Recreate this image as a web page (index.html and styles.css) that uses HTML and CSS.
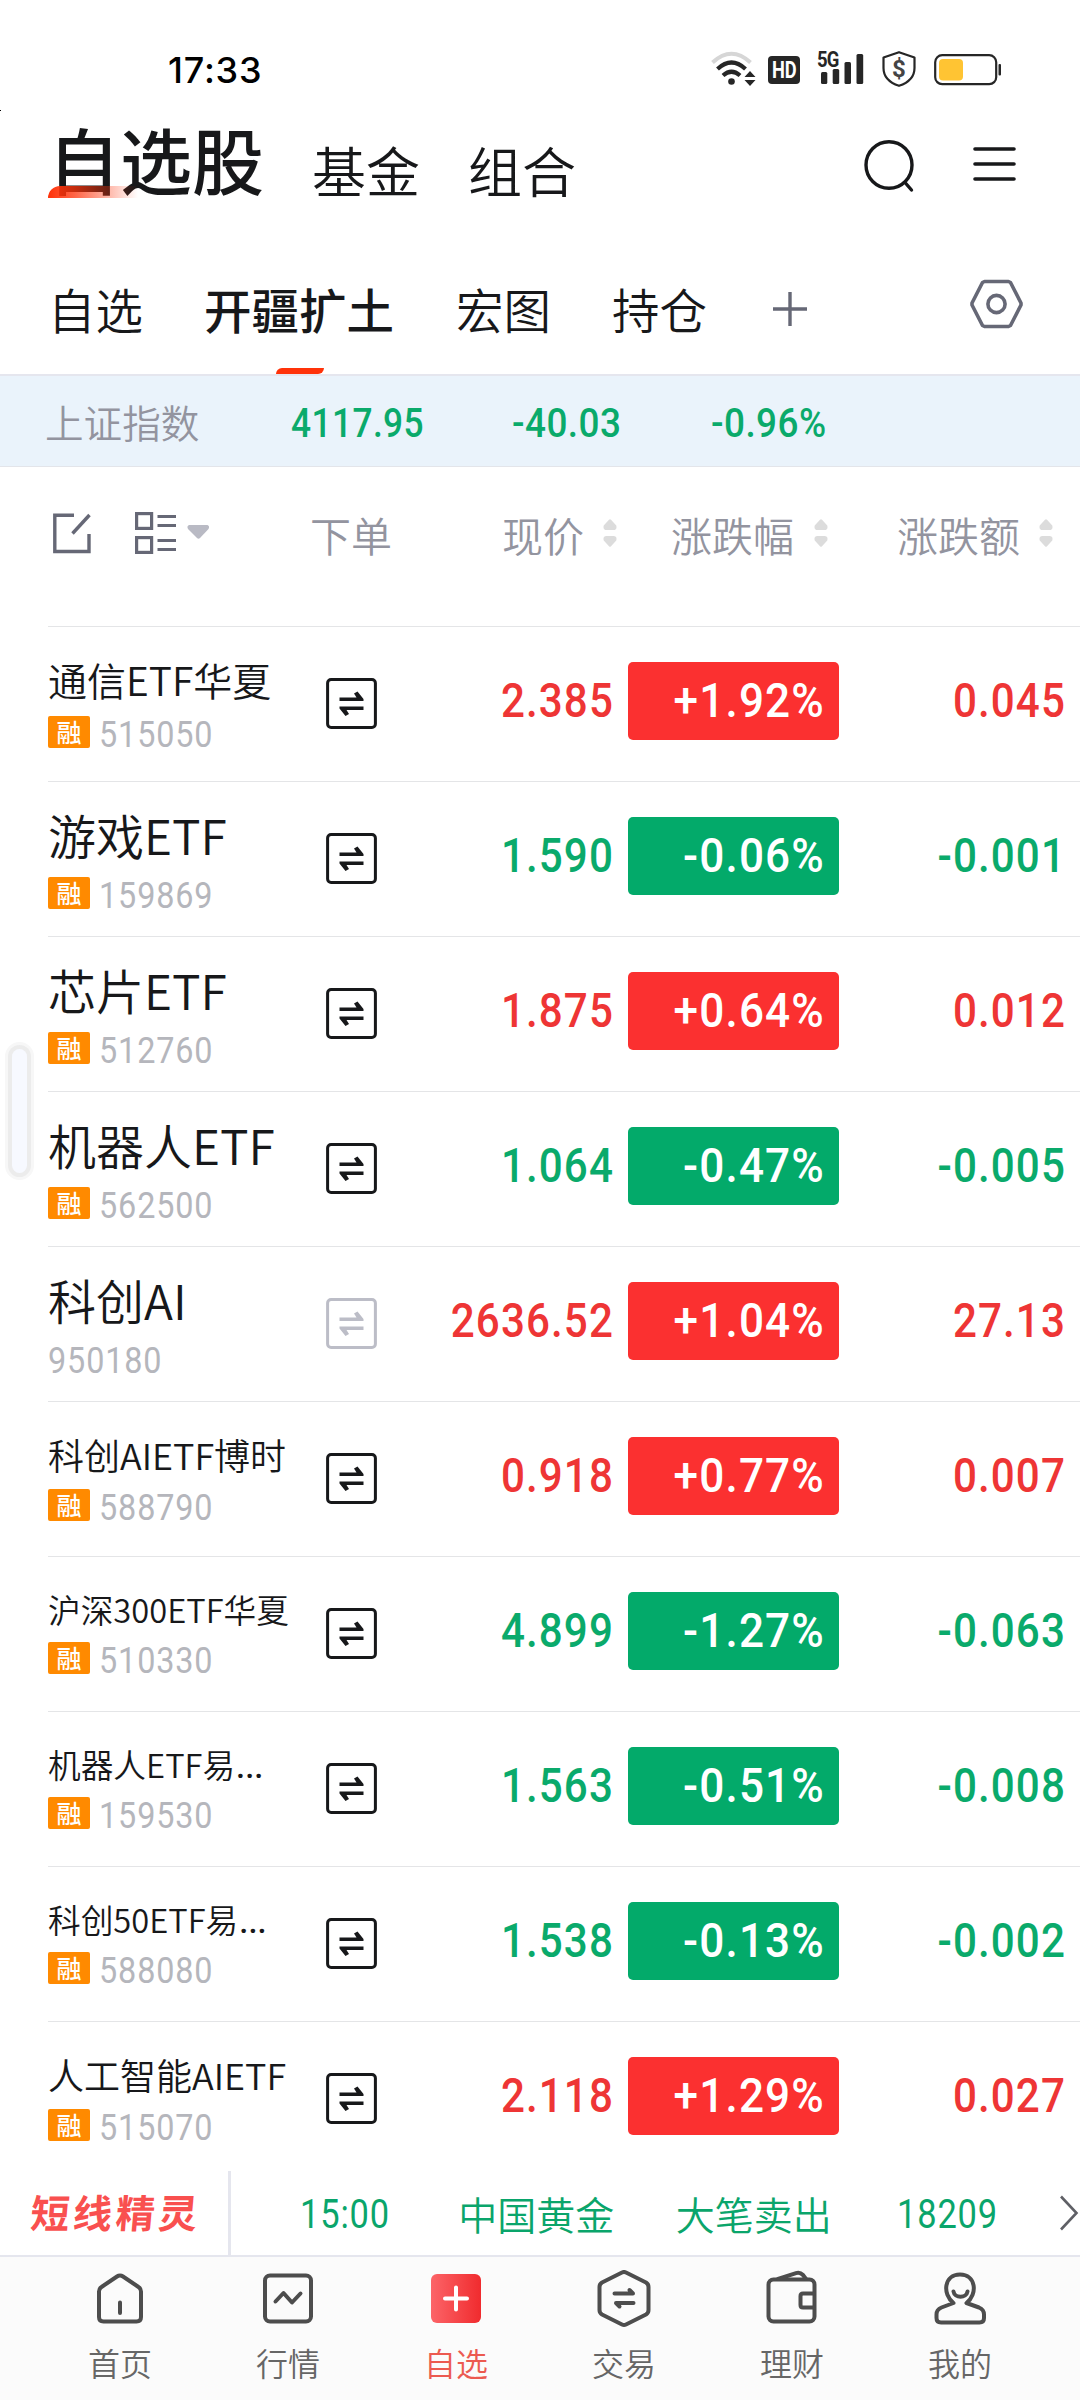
FILE: index.html
```html
<!DOCTYPE html>
<html lang="zh-CN">
<head>
<meta charset="utf-8">
<title>自选股</title>
<link rel="stylesheet" href="styles.css">
</head>
<body>
<svg class="defs" aria-hidden="true">
  <symbol id="order" viewBox="0 0 51 51">
    <rect x="1.6" y="1.6" width="47.8" height="47.8" rx="3.5" fill="none" stroke="currentColor" stroke-width="3"/>
    <path d="M13.500 19.500H30.500L28 15.500L31.500 13.500L37.500 21V23H13.500ZM37.500 28.500V32H20.500L23 36L19.500 38L13.500 30.500V28.500Z" fill="currentColor"/>
  </symbol>
  <symbol id="sort" viewBox="0 0 14 28">
    <path d="M6 .7Q7 -.3 8 .7L13.3 6.5Q14.3 11 10.5 11H3.5Q-.3 11 .7 6.5ZM6 27.300Q7 28.300 8 27.300L13.300 21.500Q14.300 17 10.500 17H3.500Q-.3 17 .7 21.500Z" fill="#dcdcdc"/>
  </symbol>
</svg>
<div class="phone">
  <i class="corner-mark"></i>
  <header class="status">
    <span class="clock">17:33</span>
    <div class="status-icons">
      <svg class="wifi" width="45" height="35" viewBox="0 0 45 35" fill="none">
        <path d="M1.500 11.500Q20.500 -6 39.500 11.500" stroke="#d6d6d6" stroke-width="4"/>
        <path d="M6.500 18Q20.500 5 34.500 18M12 24.500Q20.500 17 29 24.500" stroke="#262626" stroke-width="4.200"/>
        <circle cx="20.500" cy="30.500" r="3.300" fill="#262626"/>
        <path d="M39 20L44.500 26H33.500ZM39 35L33.500 29H44.500Z" fill="#262626"/>
      </svg>
      <span class="hd"><span>HD</span></span>
      <div class="signal">
        <span class="net">5G</span>
        <svg width="47" height="34" viewBox="0 0 47 34" fill="#262626"><rect x="4" y="21" width="6.300" height="12" rx="1.500"/><rect x="15.700" y="18" width="6.500" height="15" rx="1.500"/><rect x="27.500" y="11" width="6.500" height="22" rx="1.500"/><rect x="39.500" y="3" width="6.700" height="30" rx="1.500"/></svg>
      </div>
      <div class="shield">
        <svg width="34" height="36" viewBox="0 0 34 36" fill="none" stroke="#262626" stroke-width="2.200" stroke-linejoin="round"><path d="M17 1.200L32.500 6.500V17C32.500 26 27 31.500 17 34.800C7 31.500 1.500 26 1.500 17V6.500Z"/></svg>
        <span>$</span>
      </div>
      <svg class="battery" width="68" height="32" viewBox="0 0 68 32"><rect x="1.200" y="1.200" width="61" height="29" rx="7" fill="none" stroke="#262626" stroke-width="2.200"/><rect x="5" y="5" width="24" height="21.500" rx="4" fill="#ffc433"/><rect x="64.500" y="10" width="2.500" height="11.500" rx="1" fill="#262626"/></svg>
    </div>
  </header>

  <nav class="top">
    <span class="top-active">自选股<i></i></span>
    <span class="top-item">基金</span>
    <span class="top-item">组合</span>
    <svg class="search" width="54" height="56" viewBox="0 0 54 56" fill="none" stroke="#17181a" stroke-width="3.400" stroke-linecap="round"><ellipse cx="25" cy="26" rx="23" ry="23.300"/><path d="M41 43.500L47.500 51"/></svg>
    <svg class="menu" width="44" height="36" viewBox="0 0 44 36" stroke="#17181a" stroke-width="3.600" stroke-linecap="round"><path d="M2 3H41M2 18H41M2 33H41"/></svg>
  </nav>

  <nav class="groups">
    <span>自选</span>
    <span class="on">开疆扩土<i></i></span>
    <span>宏图</span>
    <span>持仓</span>
    <svg class="plus" width="34" height="34" viewBox="0 0 34 34" stroke="#666876" stroke-width="3.400"><path d="M0 17H34M17 0V34"/></svg>
    <svg class="gear" width="54" height="52" viewBox="0 0 54 52" fill="none" stroke="#666876" stroke-width="3.600" stroke-linejoin="round"><path d="M14.500 3.500H38.500L40.500 4.500L51 25L51 27L40.500 47.500L38.500 48.500H14.500L12.500 47.500L2 27V25L12.500 4.500Z"/><circle cx="26.500" cy="26" r="8.600"/></svg>
  </nav>

  <section class="index">
    <span class="index-name">上证指数</span>
    <span class="num i1">4117.95</span>
    <span class="num i2">-40.03</span>
    <span class="num i3">-0.96%</span>
  </section>

  <section class="head">
    <svg class="edit" width="38" height="41" viewBox="0 0 38 41" fill="none" stroke="#666876" stroke-width="3.400"><path d="M21 2.200H1.800V38.500H36V21"/><path d="M19.500 20.500L36.500 2"/></svg>
    <svg class="view" width="75" height="42" viewBox="0 0 75 42" fill="none" stroke="#666876" stroke-width="3.200"><rect x="1.600" y="1.600" width="15" height="14.800"/><rect x="1.600" y="25.600" width="15" height="14.800"/><path d="M22.500 4.500H41M22.500 13.500H41M22.500 28.500H41M22.500 37.500H41"/><path d="M54 13H72.500Q75 14 73.500 17L65 26Q63.500 27.500 62 26L53 17Q51.500 14 54 13Z" fill="#b9bac4" stroke="none"/></svg>
    <span class="h-order">下单</span>
    <span class="h-price">现价</span><svg class="sort s1"><use href="#sort"/></svg>
    <span class="h-rate">涨跌幅</span><svg class="sort s2"><use href="#sort"/></svg>
    <span class="h-diff">涨跌额</span><svg class="sort s3"><use href="#sort"/></svg>
  </section>

  <main class="list">
    <article class="row up"><div class="stock m"><b>通信ETF华夏</b><p><em>融</em><span class="num">515050</span></p></div><svg class="order"><use href="#order"/></svg><span class="num price">2.385</span><div class="rate"><span class="num">+1.92%</span></div><span class="num diff">0.045</span></article>
    <article class="row down"><div class="stock l"><b>游戏ETF</b><p><em>融</em><span class="num">159869</span></p></div><svg class="order"><use href="#order"/></svg><span class="num price">1.590</span><div class="rate"><span class="num">-0.06%</span></div><span class="num diff">-0.001</span></article>
    <article class="row up"><div class="stock l"><b>芯片ETF</b><p><em>融</em><span class="num">512760</span></p></div><svg class="order"><use href="#order"/></svg><span class="num price">1.875</span><div class="rate"><span class="num">+0.64%</span></div><span class="num diff">0.012</span></article>
    <article class="row down"><div class="stock l"><b>机器人ETF</b><p><em>融</em><span class="num">562500</span></p></div><svg class="order"><use href="#order"/></svg><span class="num price">1.064</span><div class="rate"><span class="num">-0.47%</span></div><span class="num diff">-0.005</span></article>
    <article class="row up"><div class="stock l"><b>科创AI</b><p><span class="num">950180</span></p></div><svg class="order off"><use href="#order"/></svg><span class="num price">2636.52</span><div class="rate"><span class="num">+1.04%</span></div><span class="num diff">27.13</span></article>
    <article class="row up"><div class="stock s"><b>科创AIETF博时</b><p><em>融</em><span class="num">588790</span></p></div><svg class="order"><use href="#order"/></svg><span class="num price">0.918</span><div class="rate"><span class="num">+0.77%</span></div><span class="num diff">0.007</span></article>
    <article class="row down"><div class="stock xs"><b>沪深300ETF华夏</b><p><em>融</em><span class="num">510330</span></p></div><svg class="order"><use href="#order"/></svg><span class="num price">4.899</span><div class="rate"><span class="num">-1.27%</span></div><span class="num diff">-0.063</span></article>
    <article class="row down"><div class="stock xs"><b>机器人ETF易<u>...</u></b><p><em>融</em><span class="num">159530</span></p></div><svg class="order"><use href="#order"/></svg><span class="num price">1.563</span><div class="rate"><span class="num">-0.51%</span></div><span class="num diff">-0.008</span></article>
    <article class="row down"><div class="stock xs"><b>科创50ETF易<u>...</u></b><p><em>融</em><span class="num">588080</span></p></div><svg class="order"><use href="#order"/></svg><span class="num price">1.538</span><div class="rate"><span class="num">-0.13%</span></div><span class="num diff">-0.002</span></article>
    <article class="row up"><div class="stock s"><b>人工智能AIETF</b><p><em>融</em><span class="num">515070</span></p></div><svg class="order"><use href="#order"/></svg><span class="num price">2.118</span><div class="rate"><span class="num">+1.29%</span></div><span class="num diff">0.027</span></article>
  </main>

  <section class="ticker">
    <strong><span>短线精灵</span></strong>
    <span class="num t-time">15:00</span>
    <span class="t-name">中国黄金</span>
    <span class="t-act">大笔卖出</span>
    <span class="num t-vol">18209</span>
    <svg class="more" width="20" height="36" viewBox="0 0 20 36" fill="none" stroke="#5f6066" stroke-width="2.600"><path d="M1 1.500L16.500 18L1 34.500"/></svg>
  </section>

  <nav class="tabs">
    <a><svg viewBox="0 0 60 60"><path d="M30 5.500Q31.500 5.500 33 6.500L48.500 17Q51 18.500 51 21.500V47Q51 51.500 46.500 51.500H13.500Q9 51.500 9 47V21.500Q9 18.500 11.500 17L27 6.500Q28.500 5.500 30 5.500ZM30 32.500V43"/></svg>首页</a>
    <a><svg viewBox="0 0 60 60"><rect x="7" y="5.500" width="46" height="46" rx="5"/><path d="M17.500 31.500L25.500 23L34 32.500L42.500 23.500"/></svg>行情</a>
    <a class="sel"><svg viewBox="0 0 60 60"><defs><linearGradient id="red"><stop offset="0" stop-color="#fc6468"/><stop offset="1" stop-color="#f02b2e"/></linearGradient></defs><rect x="5" y="4" width="50" height="49" rx="6" fill="url(#red)" stroke="none"/><path d="M19 28.500H41M30 17.500V39.500" stroke="#fff"/></svg>自选</a>
    <a><svg viewBox="0 0 60 60"><path d="M28 2.500Q30 1.500 32 2.500L52 12.500Q54.500 14 54.500 17V40Q54.500 43 52 44.500L32 54.500Q30 55.500 28 54.500L8 44.500Q5.500 43 5.500 40V17Q5.500 14 8 12.500Z"/><path d="M20.500 23.500H39L35.500 20M39.500 33H22L25.500 36.500" stroke-width="4"/></svg>交易</a>
    <a><svg viewBox="0 0 60 60"><rect x="6.500" y="9.500" width="46" height="42" rx="5"/><path d="M52 23.500H41Q38.500 23.500 38.500 26V35Q38.500 37.500 41 37.500H52M16 9L34 3.200Q38 2 41 5L44 9"/></svg>理财</a>
    <a><svg viewBox="0 0 60 60"><path d="M23.500 33C12 24 14 4.500 30 4.500C46 4.500 48 24 36.500 33L49 37.500Q54 39.500 54 44.500V48Q54 52.500 49.500 52.500H11Q6.500 52.500 6.500 48V44.500Q6.500 39.500 11.500 37.500ZM23.500 21.500C24.500 28.500 36.500 28.500 37.500 21.500"/><path d="M28 34H32" stroke="#fbfbfb"/></svg>我的</a>
  </nav>
  <i class="handle"></i>
</div>
</body>
</html>
```

FILE: styles.css
```css
* { box-sizing: border-box; }
body { margin: 0; background: #fff; font-family: "Noto Sans CJK SC", sans-serif; color: #17181a; }
i, em { font-style: normal; }
p { margin: 0; }
svg { display: block; flex: none; }
.defs { position: absolute; width: 0; height: 0; }
.phone { position: relative; width: 1080px; height: 2400px; overflow: hidden; display: flex; flex-direction: column; background: #fff; }
.corner-mark { position: absolute; left: 0; top: 110px; width: 1px; height: 1px; background: #000; }
.num { font-family: Roboto, sans-serif; display: inline-block; white-space: nowrap; letter-spacing: 1.300px; transform: scaleX(.86); transform-origin: right center; }

/* status bar */
.status { height: 110px; flex: none; display: flex; align-items: flex-start; padding: 50px 78px 0 168px; }
.clock { font: 450 36px/40px Inter, sans-serif; letter-spacing: .8px; color: #000; }
.status-icons { margin-left: auto; display: flex; align-items: flex-start; color: #262626; font-family: Roboto, sans-serif; font-weight: 700; }
.wifi { margin-top: 1px; margin-right: 12px; }
.hd { width: 32px; height: 28px; margin: 6px 17px 0 0; border-radius: 4px; background: #262626; color: #fff; font-size: 24px; line-height: 29px; display: flex; justify-content: center; }
.hd span { transform: scaleX(.76); }
.signal { position: relative; margin-top: 1px; margin-right: 18px; }
.net { position: absolute; left: 0; top: 1px; font-size: 22px; line-height: 16px; letter-spacing: -1px; transform: scaleX(.84); transform-origin: left; }
.shield { position: relative; margin-top: 1px; margin-right: 18px; }
.shield span { position: absolute; inset: 0; font-size: 24px; line-height: 36px; text-align: center; color: #444; }
.battery { margin-top: 4px; }

/* top navigation */
.top { height: 140px; flex: none; display: flex; align-items: flex-start; padding: 0 63px 0 48px; }
.top-active { position: relative; width: 264px; font-weight: 500; font-size: 72px; line-height: 96px; }
.top-active i { position: absolute; left: 0; top: 76px; width: 90px; height: 12px; border-radius: 12px 0 0 0; background: linear-gradient(90deg, #ff3209, rgba(255, 50, 9, .75) 30%, rgba(255, 50, 9, 0)); }
.top-item { font-size: 54px; line-height: 80px; margin-top: 20px; width: 156px; font-weight: 350; }
.search { margin: 29px 0 0 auto; }
.menu { margin: 36px 0 0 55px; }

/* watchlist groups */
.groups { height: 126px; flex: none; display: flex; align-items: flex-start; padding: 23px 56px 0 48px; border-bottom: 2px solid #e5e6ee; font-size: 47.500px; line-height: 72px; font-weight: 350; }
.groups span { margin-right: 61px; }
.groups .on { position: relative; font-weight: 500; margin-right: 62px; }
.on i { position: absolute; left: 72px; top: 95px; width: 48px; height: 6px; border-radius: 6px 0 6px 0; background: #ff3209; }
.plus { margin: 19px 0 0 5px; }
.gear { margin: 5px 0 0 auto; }

/* index strip */
.index { height: 91px; flex: none; display: flex; align-items: center; padding-left: 45px; background: #eaf3fb; border-bottom: 1px solid #e3e5ea; color: #0aaa6b; }
.index-name { width: 246px; font-size: 38.600px; line-height: 60px; color: #93949f; font-weight: 350; }
.index .num { font-size: 41px; line-height: 48px; font-weight: 500; letter-spacing: .5px; transform-origin: left center; margin-top: 3px; }
.i1 { width: 221px; }
.i2 { width: 199px; }
.index .i2, .index .i3 { transform: scaleX(.9); }

/* column heads */
.head { height: 159px; flex: none; display: flex; align-items: flex-start; padding: 45px 26px 0 53px; color: #93949f; font-size: 41px; line-height: 44px; font-weight: 350; }
.edit { margin-top: 1px; }
.view { margin-left: 44px; }
.h-order { margin-left: 100px; }
.h-price { margin-left: 110px; }
.sort { width: 14px; height: 28px; margin-top: 7px; }
.s1 { margin-left: 19px; }
.h-rate { margin-left: 54px; }
.s2 { margin-left: 20px; }
.h-diff { margin-left: 69px; }
.s3 { margin-left: 19px; }

/* quote rows */
.row { display: grid; grid-template-columns: 278px 51px 236px 211px 1fr; height: 155px; margin-left: 48px; border-top: 1px solid #e4e5e7; align-items: start; font-size: 49px; line-height: 60px; font-weight: 500; }
.up { color: #ee3535; }
.down { color: #0aaa6b; }
.stock { display: flex; flex-direction: column; color: #17181a; white-space: nowrap; }
.stock b { font-weight: 350; line-height: 60px; height: 60px; margin-top: 22px; }
.stock u { font-family: Roboto, sans-serif; font-weight: 500; text-decoration: none; margin-left: 1px; }
.stock p { display: flex; align-items: flex-start; height: 34px; font-size: 37px; line-height: 34px; }
.stock p .num { color: #b5b6bc; font-weight: 400; letter-spacing: 1px; transform: scaleX(.875); transform-origin: left center; margin-top: 2px; }
.stock em { width: 42px; height: 32px; margin-right: 9px; border-radius: 2px; background: #ff8a00; color: #fff; font-size: 25px; font-weight: 500; line-height: 30px; text-align: center; }
.l b { font-size: 48px; } .l p { margin-top: 13px; }
.m b { font-size: 39px; } .m p { margin-top: 7px; }
.s b { font-size: 36px; } .s p { margin-top: 5px; }
.xs b { font-size: 32.700px; } .xs p { margin-top: 3px; }
.order { width: 51px; height: 51px; margin-top: 51px; color: #17181a; }
.off { color: #bcbdc7; }
.price { text-align: right; margin: 44px -1px 0 0; }
.rate { width: 211px; height: 78px; margin: 35px 0 0 15px; padding: 9px 14px 0 0; border-radius: 5px; color: #fff; text-align: right; }
.up .rate { background: #fb3030; }
.down .rate { background: #03aa6a; }
.rate .num { display: block; transform: scaleX(.9); }
.diff { text-align: right; margin: 44px 14px 0 0; }

/* ticker */
.list { height: 1545px; flex: none; }
.ticker { height: 86px; flex: none; display: flex; align-items: center; background: #fff; border-bottom: 2px solid #e5e6ee; color: #0aa56b; font-size: 39px; line-height: 60px; font-weight: 350; }
.ticker strong { width: 231px; height: 84px; padding-left: 31px; border-right: 3px solid #e5e6ee; color: #f9504f; font-weight: 700; line-height: 80px; letter-spacing: 3.600px; }
.ticker strong span { display: inline-block; transform: skewX(-5deg); }
.ticker .num { font-size: 40px; font-weight: 400; letter-spacing: 1px; transform: scaleX(.86); transform-origin: left; padding-top: 4px; }
.t-time { margin-left: 69px; width: 159px; }
.t-name { width: 218px; }
.t-act { width: 222px; }
.t-vol { width: 163px; }

/* bottom tabs */
.tabs { flex: 1; display: grid; grid-template-columns: repeat(6, 168px); justify-content: center; background: #fbfbfb; }
.tabs a { display: flex; flex-direction: column; align-items: center; padding-top: 13px; font-size: 32px; line-height: 44px; color: #666; font-weight: 350; }
.tabs svg { width: 60px; height: 60px; margin-bottom: 10px; fill: none; stroke: #4d4d4d; stroke-width: 4; stroke-linecap: round; stroke-linejoin: round; }
.tabs .sel { color: #ec5a50; }

.handle { position: absolute; left: 12px; top: 1049px; width: 15px; height: 124px; border-radius: 8px; background: #f7f9ff; box-shadow: 0 0 0 4px #ececec, 0 0 0 7px #f7f7f7; }
```
